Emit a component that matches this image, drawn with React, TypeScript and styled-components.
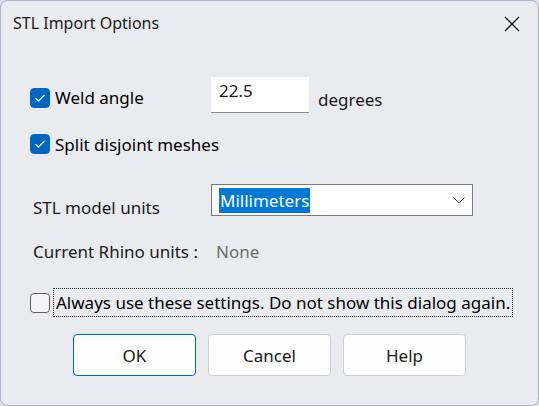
import React from "react";
import styled, { createGlobalStyle } from "styled-components";

const Global = createGlobalStyle`
  html, body { margin: 0; padding: 0; background: #d9dde6; }
  body { font-family: "Noto Sans", "Open Sans", sans-serif; }
  * { box-sizing: border-box; }
`;

const Window = styled.div`
  width: 539px;
  height: 406px;
  background: #eaebef;
  border: 1px solid #a9b3c9;
  border-radius: 8px;
  display: flex;
  flex-direction: column;
  overflow: hidden;
  color: #000;
  font-size: 17px;
`;

const TitleBar = styled.div`
  height: 45px;
  display: flex;
  align-items: center;
  justify-content: space-between;
  padding-left: 12px;
`;

const Title = styled.div`
  font-size: 16px;
  color: #1a1a1a;
  margin-top: -2px;
`;

const CloseButton = styled.div`
  width: 46px;
  height: 45px;
  display: flex;
  align-items: center;
  justify-content: center;
  margin-right: 3px;
`;

const Body = styled.div`
  display: flex;
  flex-direction: column;
  padding-left: 29px;
`;

const Row = styled.div<{ $mt: number; $h: number; $pl?: number }>`
  display: flex;
  align-items: center;
  margin-top: ${(p) => p.$mt}px;
  height: ${(p) => p.$h}px;
  padding-left: ${(p) => p.$pl ?? 0}px;
`;

const CheckLabel = styled.label<{ $w?: number; $dy?: number }>`
  display: flex;
  align-items: center;
  gap: 5px;
  width: ${(p) => (p.$w ? `${p.$w}px` : "auto")};
  padding-top: ${(p) => p.$dy ?? 0}px;
`;

const Box = styled.span<{ $checked: boolean }>`
  width: 20px;
  height: 20px;
  border-radius: 4px;
  flex: none;
  display: flex;
  align-items: center;
  justify-content: center;
  background: ${(p) => (p.$checked ? "#0067c0" : "#f4f4f6")};
  border: 1px solid ${(p) => (p.$checked ? "#0067c0" : "#5e5e5e")};
`;

const TextInput = styled.div`
  width: 98px;
  height: 36px;
  background: #fff;
  border-bottom: 1px solid #8a8a8a;
  padding: 2px 0 0 8px;
  font-size: 17px;
  color: #1a1a1a;
  align-self: flex-start;
`;

const Unit = styled.span`
  margin-left: 9px;
  margin-top: 8px;
  color: #1a1a1a;
`;

const FieldLabel = styled.span<{ $w: number; $muted?: boolean; $dy?: number }>`
  width: ${(p) => p.$w}px;
  flex: none;
  padding-top: ${(p) => p.$dy ?? 0}px;
  color: ${(p) => (p.$muted ? "#6d6d6d" : "#1a1a1a")};
`;

const Select = styled.div`
  width: 262px;
  height: 32px;
  background: #fff;
  border: 1px solid #7a7a7a;
  display: flex;
  align-items: center;
  justify-content: space-between;
  padding: 0 7px 0 7px;
`;

const Selected = styled.span`
  background: #0078d7;
  color: #fff;
  height: 25px;
  line-height: 25px;
  padding: 0 1px;
`;

const FocusText = styled.span`
  outline: 1px dotted #222;
  outline-offset: 0;
  padding: 0 2px;
  height: 27px;
  line-height: 27px;
  margin-left: -1px;
`;

const Buttons = styled.div`
  display: flex;
  gap: 12px;
  margin-top: 18px;
  padding-left: 72px;
`;

const Button = styled.div<{ $default?: boolean }>`
  width: 123px;
  height: 42px;
  border-radius: 4px;
  background: #fdfdfd;
  border: 1px solid ${(p) => (p.$default ? "#0067c0" : "#d0d0d0")};
  display: flex;
  align-items: center;
  justify-content: center;
  color: #1a1a1a;
`;

const Check = () => (
  <svg width="12" height="10" viewBox="0 0 12 10">
    <polyline points="1.5,5.2 4.5,8 10.5,2" fill="none" stroke="#fff" strokeWidth="1.2" />
  </svg>
);

export default function App() {
  return (
    <>
      <Global />
      <Window>
        <TitleBar>
          <Title>STL Import Options</Title>
          <CloseButton>
            <svg width="16" height="16" viewBox="0 0 16 16">
              <path d="M1 1 L15 15 M15 1 L1 15" stroke="#1a1a1a" strokeWidth="1.3" fill="none" />
            </svg>
          </CloseButton>
        </TitleBar>
        <Body>
          <Row $mt={31} $h={36}>
            <CheckLabel $w={181} $dy={5}>
              <Box $checked><Check /></Box>
              <span>Weld angle</span>
            </CheckLabel>
            <TextInput>22.5</TextInput>
            <Unit>degrees</Unit>
          </Row>
          <Row $mt={18} $h={26}>
            <CheckLabel>
              <Box $checked><Check /></Box>
              <span>Split disjoint meshes</span>
            </CheckLabel>
          </Row>
          <Row $mt={27} $h={32} $pl={3}>
            <FieldLabel $w={178} $dy={14}>STL model units</FieldLabel>
            <Select>
              <Selected>Millimeters</Selected>
              <svg width="12" height="7" viewBox="0 0 12 7">
                <polyline points="0.5,0.5 6,6 11.5,0.5" fill="none" stroke="#5a5a5a" strokeWidth="1" />
              </svg>
            </Select>
          </Row>
          <Row $mt={23} $h={24} $pl={3}>
            <FieldLabel $w={183}>Current Rhino units :</FieldLabel>
            <FieldLabel $w={60} $muted>None</FieldLabel>
          </Row>
          <Row $mt={26} $h={27}>
            <CheckLabel>
              <Box $checked={false} />
              <FocusText>Always use these settings. Do not show this dialog again.</FocusText>
            </CheckLabel>
          </Row>
        </Body>
        <Buttons>
          <Button $default>OK</Button>
          <Button>Cancel</Button>
          <Button>Help</Button>
        </Buttons>
      </Window>
    </>
  );
}
